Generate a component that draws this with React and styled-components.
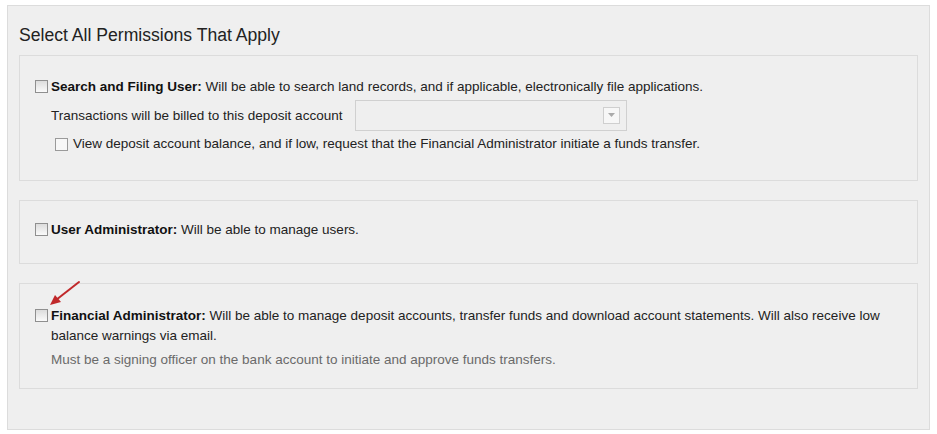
import styled, { createGlobalStyle } from "styled-components";

const GlobalStyle = createGlobalStyle`
  html, body {
    margin: 0;
    padding: 0;
    background: #ffffff;
  }
  body {
    font-family: Tahoma, "Liberation Sans", "DejaVu Sans", sans-serif;
    color: #222;
  }
`;

function Arrow() {
  return (
    <ArrowSvg width="34" height="28" viewBox="0 0 34 28">
      <line x1="31" y1="2" x2="8" y2="20" stroke="#c0282a" strokeWidth="2" strokeLinecap="round" />
      <polygon points="2,25 13,22 7,15" fill="#c0282a" />
    </ArrowSvg>
  );
}

function App() {
  return (
    <Page>
      <GlobalStyle />
      <Outer>
        <Heading>Select All Permissions That Apply</Heading>

        <Panel $pad="21px 15px 26px">
          <Row>
            <Check />
            <span>
              <b>Search and Filing User:</b> Will be able to search land records, and if applicable, electronically file applications.
            </span>
          </Row>
          <SubRow>
            <span>Transactions will be billed to this deposit account</span>
            <Select>
              <DropButton>
                <svg width="7" height="5" viewBox="0 0 7 5">
                  <polygon points="0,0 7,0 3.5,4" fill="#aaa" />
                </svg>
              </DropButton>
            </Select>
          </SubRow>
          <ViewRow>
            <FlatCheck />
            <span>View deposit account balance, and if low, request that the Financial Administrator initiate a funds transfer.</span>
          </ViewRow>
        </Panel>

        <Panel $pad="19px 15px 23px">
          <Row>
            <Check />
            <span>
              <b>User Administrator:</b> Will be able to manage users.
            </span>
          </Row>
        </Panel>

        <Panel $pad="22px 15px 18px" $relative>
          <Arrow />
          <Row>
            <Check />
            <span>
              <b>Financial Administrator:</b> Will be able to manage deposit accounts, transfer funds and download account statements. Will also receive low balance warnings via email.
            </span>
          </Row>
          <Note>Must be a signing officer on the bank account to initiate and approve funds transfers.</Note>
        </Panel>
      </Outer>
    </Page>
  );
}

export default App;

const Page = styled.div`
  width: 937px;
  height: 434px;
  padding: 5px 7px 0 7px;
  box-sizing: border-box;
`;

const Outer = styled.div`
  width: 923px;
  height: 425px;
  box-sizing: border-box;
  background: #efefef;
  border: 1px solid #dcdcdc;
  padding: 18px 11px 0 11px;
`;

const Heading = styled.div`
  font-size: 17.6px;
  line-height: 22px;
  color: #222;
  margin-bottom: 9px;
`;

const Panel = styled.div`
  position: ${(p) => (p.$relative ? "relative" : "static")};
  border: 1px solid #dcdcdc;
  padding: ${(p) => p.$pad};
  margin-bottom: 19px;
  font-size: 13.5px;
  line-height: 20px;
  color: #222;
  b {
    font-weight: bold;
    color: #111;
  }
`;

const Row = styled.div`
  display: flex;
  align-items: flex-start;
  gap: 3px;
`;

const Check = styled.span`
  flex: none;
  width: 11px;
  height: 11px;
  margin-top: 3px;
  border: 1px solid #8f8f8f;
  background: linear-gradient(#dcdcdc, #fafafa);
`;

const FlatCheck = styled.span`
  flex: none;
  width: 11px;
  height: 11px;
  border: 1px solid #9a9a9a;
  background: #f7f7f7;
`;

const SubRow = styled.div`
  display: flex;
  align-items: center;
  gap: 13px;
  margin: 3px 0 0 16px;
`;

const Select = styled.div`
  width: 272px;
  height: 31px;
  box-sizing: border-box;
  border: 1px solid #d0d0d0;
  background: #efefef;
  display: flex;
  align-items: center;
  justify-content: flex-end;
  padding-right: 6px;
`;

const DropButton = styled.div`
  width: 17px;
  height: 17px;
  box-sizing: border-box;
  border: 1px solid #cfcfcf;
  background: #f7f7f7;
  display: flex;
  align-items: center;
  justify-content: center;
`;

const ViewRow = styled.div`
  display: flex;
  align-items: center;
  gap: 5px;
  margin: 3px 0 0 20px;
`;

const Note = styled.div`
  color: #6a6a6a;
  margin: 4px 0 0 16px;
`;

const ArrowSvg = styled.svg`
  position: absolute;
  left: 28px;
  top: -4px;
`;
